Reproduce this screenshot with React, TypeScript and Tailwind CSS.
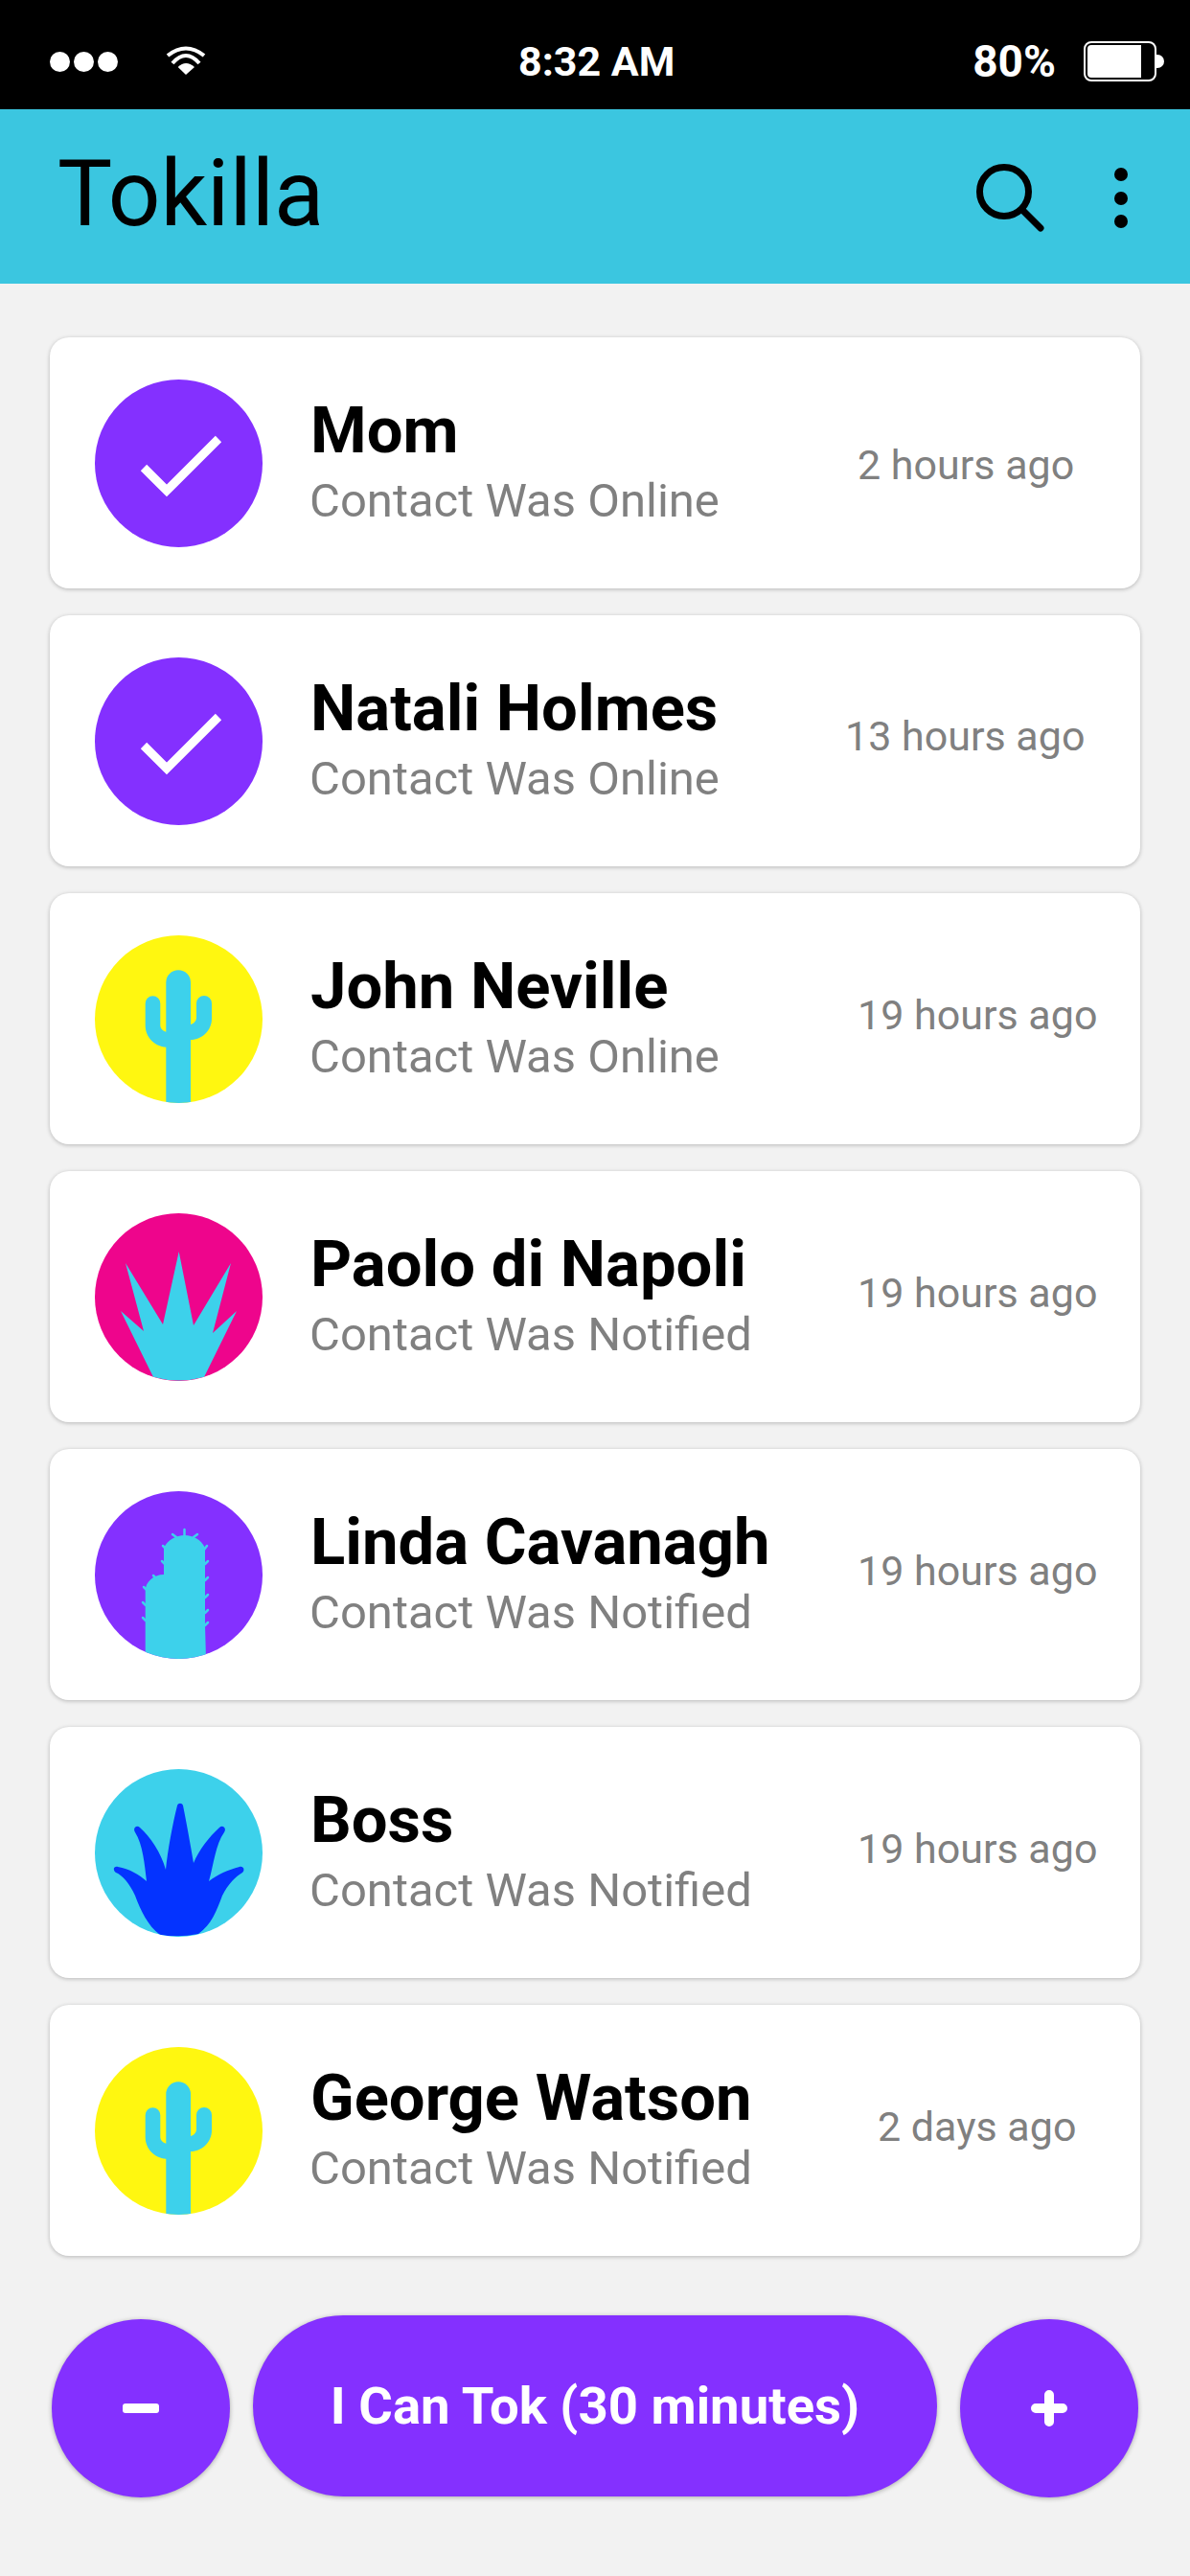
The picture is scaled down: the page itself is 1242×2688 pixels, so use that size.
const CYAN = "#3dd1eb";

const CheckIcon = () => (
  <svg viewBox="0 0 175 175" className="w-full h-full">
    <path d="M51 92 L75 116 L129 62" fill="none" stroke="#fff" strokeWidth="9" />
  </svg>
);

const CactusIcon = () => (
  <svg viewBox="0 0 175 175" className="w-full h-full">
    <path
      d="M74.300 175 V116.700 C62 116 52.700 106 52.700 94 V71 A7.800 7.800 0 0 1 68.300 71 V94 C68.300 97 71 100 74.300 100.700 V49 A12.850 12.850 0 0 1 100 49 V93 C103.500 92 106 89 106 85.700 V71 A8 8 0 0 1 122 71 V87 C122 99 112 109 100 109 V175 Z"
      fill={CYAN}
    />
  </svg>
);

const SpikyIcon = () => (
  <svg viewBox="0 0 175 175" className="w-full h-full">
    <path
      d="M61 171 L27 102 L51 123 L32 52 L71 116 L87.700 40 L103 117 L142 52 L123 125 L148 102 L114 171 Q87.500 178 61 171 Z"
      fill={CYAN}
    />
  </svg>
);

const AgaveIcon = () => (
  <svg viewBox="0 0 175 175" className="w-full h-full">
    <path
      d="M68 173 C55 163 48 148 42 132 C36 119 29 111 22 108 C18 105 20 101 24 102 C36 104 46 110 54 117 C52 100 50 78 42 66 C39 61 44 58 47 61 C58 71 69 87 74 105 C76 85 81 58 86 38 C87 35 91 35 92 38 C96 58 100 80 103 98 C109 84 119 71 130 61 C133 58 138 61 135 66 C126 78 124 100 119 117 C128 110 139 105 151 102 C155 101 157 105 154 108 C147 112 139 120 133 132 C127 148 122 162 108 172 Q88 176 68 173 Z"
      fill="#0433ff"
    />
  </svg>
);

const spines = [
  "M93.500 40 V47",
  "M81 45 L85 48",
  "M107 45 L103 48",
  "M71 57 L74 60",
  "M117 57 L114 61",
  "M70 73 L73 76",
  "M118 73 L115 76",
  "M118 90 L115 93",
  "M118 108 L115 111",
  "M118 124 L115 127",
  "M118 137 L115 140",
  "M61 88 L64 91",
  "M51 100 L54 103",
  "M50 116 L53 119",
  "M50 132 L53 135",
];

const ColumnCactusIcon = () => (
  <svg viewBox="0 0 175 175" className="w-full h-full">
    <path
      d="M52.700 175 V104 C52.700 95 61 87 72 87 V59 C76 51 85 46 93.500 46 C103 46 111 51 115 59 V140 L116 175 Z"
      fill={CYAN}
    />
    {spines.map((d) => (
      <path key={d} d={d} stroke={CYAN} strokeWidth="2.500" strokeLinecap="round" />
    ))}
  </svg>
);

const contacts = [
  { name: "Mom", status: "Contact Was Online", time: "2 hours ago", timeClass: "pl-[59px] pt-[5px]", bg: "bg-[#8430ff]", icon: <CheckIcon /> },
  { name: "Natali Holmes", status: "Contact Was Online", time: "13 hours ago", timeClass: "pl-[46px] pb-[9px]", bg: "bg-[#8430ff]", icon: <CheckIcon /> },
  { name: "John Neville", status: "Contact Was Online", time: "19 hours ago", timeClass: "pl-[59px] pb-[7px]", bg: "bg-[#fff710]", icon: <CactusIcon /> },
  { name: "Paolo di Napoli", status: "Contact Was Notified", time: "19 hours ago", timeClass: "pl-[59px] pb-[7px]", bg: "bg-[#ee058c]", icon: <SpikyIcon /> },
  { name: "Linda Cavanagh", status: "Contact Was Notified", time: "19 hours ago", timeClass: "pl-[59px] pb-[7px]", bg: "bg-[#8430ff]", icon: <ColumnCactusIcon /> },
  { name: "Boss", status: "Contact Was Notified", time: "19 hours ago", timeClass: "pl-[59px] pb-[7px]", bg: "bg-[#3dd1eb]", icon: <AgaveIcon /> },
  { name: "George Watson", status: "Contact Was Notified", time: "2 days ago", timeClass: "pl-[80px] pb-[7px]", bg: "bg-[#fff710]", icon: <CactusIcon /> },
];

const StatusBar = () => (
  <div className="h-[114px] bg-black flex items-center pt-[14px] pl-[52px] pr-[27px] text-white font-bold">
    <div className="flex items-center w-[489px]">
      <div className="flex gap-[4px]">
        <span className="w-[21px] h-[21px] rounded-full bg-white" />
        <span className="w-[21px] h-[21px] rounded-full bg-white" />
        <span className="w-[21px] h-[21px] rounded-full bg-white" />
      </div>
      <svg viewBox="0 0 44 32" className="w-[44px] h-[32px] ml-[49px] -mt-[3px]">
        <path d="M3 11 Q22 -4 41 11 M8 19 Q22 3 36 19" fill="none" stroke="#fff" strokeWidth="4" />
        <path d="M13.700 23 Q22 15 31 23 L22 31 Z" fill="#fff" />
      </svg>
    </div>
    <span className="text-[43px]">8:32 AM</span>
    <div className="flex items-center ml-auto gap-[29px]">
      <span className="text-[46px]">80%</span>
      <div className="flex items-center">
        <div className="w-[76px] h-[42px] border-2 border-white rounded-[8px] p-[2px]">
          <div className="w-[56px] h-full bg-white rounded-l-[4px]" />
        </div>
        <span className="w-[8px] h-[14px] bg-white rounded-r-full" />
      </div>
    </div>
  </div>
);

const Header = () => (
  <div className="h-[182px] bg-[#3bc6e0] flex items-center justify-between pl-[60px] pr-[65px]">
    <h1 className="text-[96px] leading-none font-normal text-black -mt-[6px]">Tokilla</h1>
    <div className="flex items-center gap-[73px] mt-[3px]">
      <svg viewBox="0 0 71 71" className="w-[71px] h-[71px]">
        <circle cx="29" cy="29" r="25.500" fill="none" stroke="#000" strokeWidth="7" />
        <path d="M48 48 L67 67" stroke="#000" strokeWidth="7" strokeLinecap="round" />
      </svg>
      <div className="flex flex-col gap-[10.500px]">
        <span className="w-[14px] h-[14px] rounded-full bg-black" />
        <span className="w-[14px] h-[14px] rounded-full bg-black" />
        <span className="w-[14px] h-[14px] rounded-full bg-black" />
      </div>
    </div>
  </div>
);

const ContactCard = ({ name, status, time, timeClass, bg, icon }: (typeof contacts)[number]) => (
  <div className="h-[262px] bg-white rounded-[20px] shadow-[0_1px_4px_rgba(0,0,0,0.25)] flex items-center pl-[47px]">
    <div className={`w-[175px] h-[175px] rounded-full overflow-hidden shrink-0 ${bg}`}>{icon}</div>
    <div className="ml-[50px] flex-1 min-w-0 mb-[6px]">
      <div className="text-[67px] leading-[74px] font-bold text-black whitespace-nowrap">{name}</div>
      <div className="text-[49px] leading-[50px] mt-[12px] -ml-[1px] text-[#808080] whitespace-nowrap">{status}</div>
    </div>
    <div className="w-[354px] shrink-0">
      <div className={`text-[43px] text-[#808080] whitespace-nowrap ${timeClass}`}>{time}</div>
    </div>
  </div>
);

export default function App() {
  return (
    <div className="w-[1242px] h-[2688px] bg-[#f2f2f2] font-['Roboto',sans-serif] flex flex-col">
      <StatusBar />
      <Header />
      <div className="px-[52px] pt-[56px] flex flex-col gap-[28px]">
        {contacts.map((c) => (
          <ContactCard key={c.name} {...c} />
        ))}
      </div>
      <div className="flex items-start gap-[24px] px-[54px] mt-[62px]">
        <button className="w-[186px] h-[186px] mt-[4px] rounded-full bg-[#8430ff] shadow-[0_1px_5px_rgba(0,0,0,0.3)] flex items-center justify-center shrink-0">
          <span className="w-[38px] h-[10px] bg-white rounded-[3px]" />
        </button>
        <button className="w-[714px] h-[189px] rounded-full bg-[#8430ff] shadow-[0_1px_5px_rgba(0,0,0,0.3)] text-white text-[54.500px] font-bold shrink-0">
          I Can Tok (30 minutes)
        </button>
        <button className="w-[186px] h-[186px] mt-[4px] rounded-full bg-[#8430ff] shadow-[0_1px_5px_rgba(0,0,0,0.3)] flex items-center justify-center shrink-0">
          <svg viewBox="0 0 38 38" className="w-[38px] h-[38px]">
            <path d="M19 5 V33 M5 19 H33" stroke="#fff" strokeWidth="10" strokeLinecap="round" />
          </svg>
        </button>
      </div>
    </div>
  );
}
